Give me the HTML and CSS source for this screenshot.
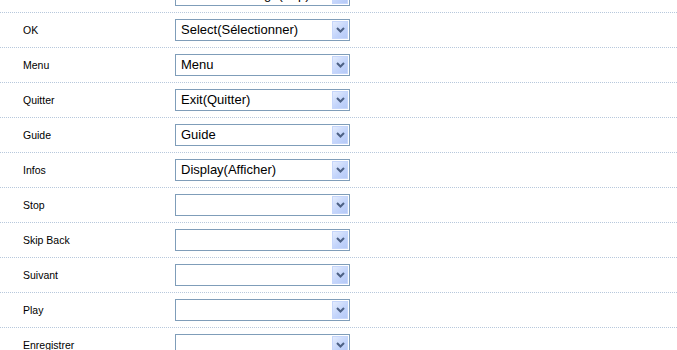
FILE: index.html
```html
<!DOCTYPE html>
<html lang="fr">
<head>
<meta charset="utf-8">
<title>Touches</title>
<link rel="stylesheet" href="styles.css">
</head>
<body>
<div class="list">
  <div class="row"><span class="label"></span><div class="select"><span class="value">Channel Change(Zap)</span><span class="btn"><svg width="9" height="6" viewBox="0 0 9 6"><polyline points="1,1 4.5,4.5 8,1" fill="none" stroke="#4d6185" stroke-width="2"/></svg></span></div></div>
  <div class="row"><span class="label">OK</span><div class="select"><span class="value">Select(Sélectionner)</span><span class="btn"><svg width="9" height="6" viewBox="0 0 9 6"><polyline points="1,1 4.5,4.5 8,1" fill="none" stroke="#4d6185" stroke-width="2"/></svg></span></div></div>
  <div class="row"><span class="label">Menu</span><div class="select"><span class="value">Menu</span><span class="btn"><svg width="9" height="6" viewBox="0 0 9 6"><polyline points="1,1 4.5,4.5 8,1" fill="none" stroke="#4d6185" stroke-width="2"/></svg></span></div></div>
  <div class="row"><span class="label">Quitter</span><div class="select"><span class="value">Exit(Quitter)</span><span class="btn"><svg width="9" height="6" viewBox="0 0 9 6"><polyline points="1,1 4.5,4.5 8,1" fill="none" stroke="#4d6185" stroke-width="2"/></svg></span></div></div>
  <div class="row"><span class="label">Guide</span><div class="select"><span class="value">Guide</span><span class="btn"><svg width="9" height="6" viewBox="0 0 9 6"><polyline points="1,1 4.5,4.5 8,1" fill="none" stroke="#4d6185" stroke-width="2"/></svg></span></div></div>
  <div class="row"><span class="label">Infos</span><div class="select"><span class="value">Display(Afficher)</span><span class="btn"><svg width="9" height="6" viewBox="0 0 9 6"><polyline points="1,1 4.5,4.5 8,1" fill="none" stroke="#4d6185" stroke-width="2"/></svg></span></div></div>
  <div class="row"><span class="label">Stop</span><div class="select"><span class="value"></span><span class="btn"><svg width="9" height="6" viewBox="0 0 9 6"><polyline points="1,1 4.5,4.5 8,1" fill="none" stroke="#4d6185" stroke-width="2"/></svg></span></div></div>
  <div class="row"><span class="label">Skip Back</span><div class="select"><span class="value"></span><span class="btn"><svg width="9" height="6" viewBox="0 0 9 6"><polyline points="1,1 4.5,4.5 8,1" fill="none" stroke="#4d6185" stroke-width="2"/></svg></span></div></div>
  <div class="row"><span class="label">Suivant</span><div class="select"><span class="value"></span><span class="btn"><svg width="9" height="6" viewBox="0 0 9 6"><polyline points="1,1 4.5,4.5 8,1" fill="none" stroke="#4d6185" stroke-width="2"/></svg></span></div></div>
  <div class="row"><span class="label">Play</span><div class="select"><span class="value"></span><span class="btn"><svg width="9" height="6" viewBox="0 0 9 6"><polyline points="1,1 4.5,4.5 8,1" fill="none" stroke="#4d6185" stroke-width="2"/></svg></span></div></div>
  <div class="row"><span class="label">Enregistrer</span><div class="select"><span class="value"></span><span class="btn"><svg width="9" height="6" viewBox="0 0 9 6"><polyline points="1,1 4.5,4.5 8,1" fill="none" stroke="#4d6185" stroke-width="2"/></svg></span></div></div>
</div>
</body>
</html>
```
FILE: styles.css
```css
html, body {
  margin: 0;
  padding: 0;
  background: #ffffff;
  overflow: hidden;
}
body {
  font-family: "Liberation Sans", Arial, sans-serif;
  color: #000000;
}
.list {
  margin-top: -22px;
}
.row {
  display: flex;
  align-items: center;
  height: 34px;
  border-bottom: 1px dotted #b7c8dc;
}
.label {
  box-sizing: border-box;
  width: 175px;
  padding-left: 23px;
  font-size: 10.5px;
  color: #000;
}
.select {
  box-sizing: border-box;
  width: 175px;
  height: 22px;
  border: 1px solid #7f9db9;
  display: flex;
  align-items: stretch;
  background: #fff;
}
.value {
  flex: 1;
  padding-left: 5px;
  font-size: 13px;
  line-height: 20px;
  white-space: nowrap;
  overflow: hidden;
}
.btn {
  box-sizing: border-box;
  width: 16px;
  margin: 1px;
  border: 1px solid #c6d6fb;
  background: linear-gradient(135deg, #e4ecfd 0%, #c4d5fb 55%, #b5c9f7 100%);
  display: flex;
  align-items: center;
  justify-content: center;
}
.btn svg {
  display: block;
}
```
